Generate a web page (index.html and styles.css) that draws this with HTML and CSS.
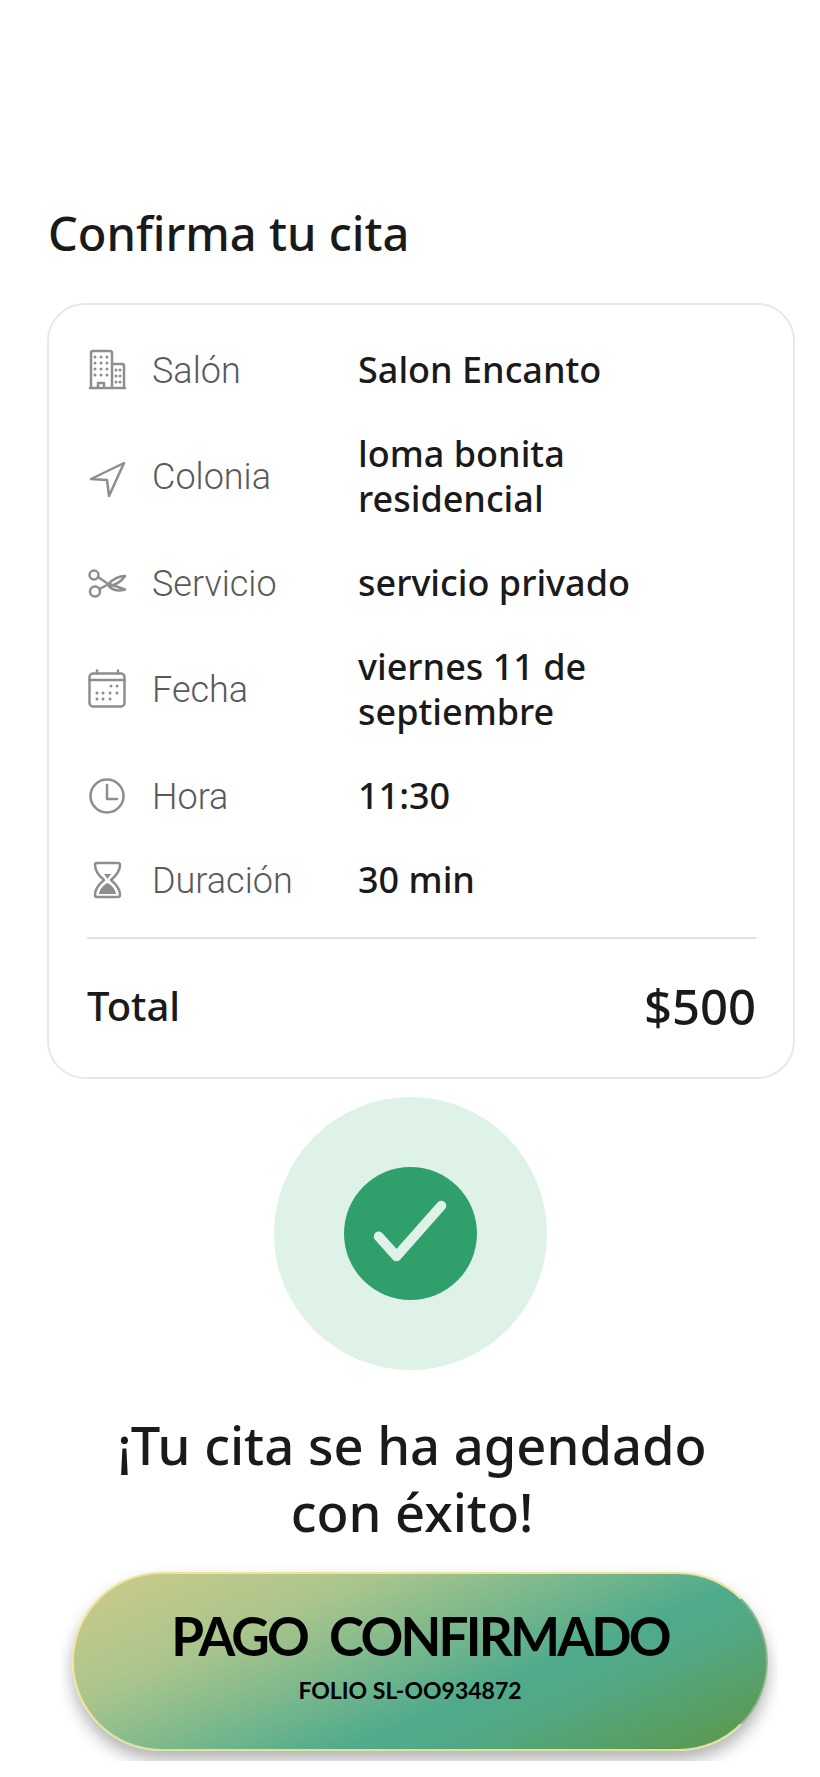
FILE: index.html
```html
<!DOCTYPE html>
<html lang="es">
<head>
  <meta charset="UTF-8">
  <meta name="viewport" content="width=device-width, initial-scale=1.0">
  <title>Confirma tu cita</title>
  <link rel="stylesheet" href="styles.css">
</head>
<body>
  <h1 class="page-title">Confirma tu cita</h1>

  <section class="summary-card">
    <div class="detail-list">
      <div class="detail-label">
        <svg class="detail-icon" viewBox="0 0 40 44">
          <path d="M4 39V4a2 2 0 0 1 2-2h17a2 2 0 0 1 2 2v35M25 15h10a2 2 0 0 1 2 2v22M3 39h35M11 39v-5h6v5" />
          <path class="dots" d="M8 8h.01M14 8h.01M20 8h.01M8 14h.01M14 14h.01M20 14h.01M8 20h.01M14 20h.01M20 20h.01M8 26h.01M14 26h.01M20 26h.01M29 21h.01M33 21h.01M29 27h.01M33 27h.01M29 33h.01M33 33h.01" />
        </svg>
        <span>Salón</span>
      </div>
      <div class="detail-value">Salon Encanto</div>

      <div class="detail-label">
        <svg class="detail-icon" viewBox="0 0 40 44">
          <path d="M4 24L37 8L22 41L20 25Z" />
        </svg>
        <span>Colonia</span>
      </div>
      <div class="detail-value">loma bonita residencial</div>

      <div class="detail-label">
        <svg class="detail-icon" viewBox="0 0 40 44">
          <circle cx="7" cy="13" r="4.5" />
          <circle cx="8" cy="29.5" r="5" />
          <path d="M11 15L19 20.5M12.500 27L20 23C26 17 32 14 38 14C34 20 28 23 22 24.500M21 21.500L38 27.500C32 29.500 27 29 22 24.500" />
        </svg>
        <span>Servicio</span>
      </div>
      <div class="detail-value">servicio privado</div>

      <div class="detail-label">
        <svg class="detail-icon" viewBox="0 0 40 44">
          <rect x="2.500" y="5.500" width="35" height="33" rx="3.500" />
          <path d="M2.500 12h35M10 2.500v3M31 2.500v3" />
          <path class="dots" d="M24 18h.01M30 18h.01M10 25h.01M16 25h.01M23 25h.01M30 25h.01M10 31h.01M16 31h.01M23 31h.01" />
        </svg>
        <span>Fecha</span>
      </div>
      <div class="detail-value">viernes 11 de septiembre</div>

      <div class="detail-label">
        <svg class="detail-icon" viewBox="0 0 40 44">
          <circle cx="20" cy="21" r="16.500" />
          <path d="M20 10v14h10" />
        </svg>
        <span>Hora</span>
      </div>
      <div class="detail-value">11:30</div>

      <div class="detail-label">
        <svg class="detail-icon" viewBox="0 0 40 44">
          <path d="M10 4h21a2 2 0 0 1 2 2c0 6-3 10-9 15c6 5 9 9 9 15a2 2 0 0 1-2 2H10a2 2 0 0 1-2-2c0-6 3-10 9-15c-6-5-9-9-9-15a2 2 0 0 1 2-2Z" />
          <path class="sand" d="M20.500 24c-4 2-8 6-8.500 11h17c-.5-5-4.500-9-8.500-11ZM17 15h7l-3.500 5Z" />
        </svg>
        <span>Duración</span>
      </div>
      <div class="detail-value">30 min</div>
    </div>

    <div class="total-row">
      <span class="total-label">Total</span>
      <span class="total-amount">$500</span>
    </div>
  </section>

  <div class="success-badge">
    <div class="success-dot">
      <svg class="success-check" viewBox="0 0 134 134">
        <path d="M35 70L53 90L98 39" />
      </svg>
    </div>
  </div>

  <h2 class="success-title">¡Tu cita se ha agendado con éxito!</h2>

  <div class="pay-wrap">
    <div class="pay-button">
      <div class="pay-title">PAGO CONFIRMADO</div>
      <div class="pay-folio">FOLIO SL-OO934872</div>
    </div>
  </div>
</body>
</html>
```

FILE: styles.css
```css
* {
  margin: 0;
  padding: 0;
  box-sizing: border-box;
}

body {
  background-color: #fff;
  font-family: "Noto Sans", Arial, sans-serif;
  color: #1a1a1a;
  height: 1777px;
  overflow: hidden;
}

.page-title {
  font-size: 47px;
  font-weight: 500;
  line-height: 60px;
  padding: 203px 0 0 48px;
}

.summary-card {
  margin: 40px 25px 0 47px;
  height: 776px;
  border: 2px solid #e8e8e8;
  border-radius: 38px;
  padding: 42px 37px 0 38px;
}

.detail-list {
  display: grid;
  grid-template-columns: 271px 1fr;
  row-gap: 37px;
  align-items: center;
}

.detail-label {
  display: flex;
  align-items: center;
  gap: 25px;
  font-family: Roboto, Arial, sans-serif;
  font-size: 36px;
  font-weight: 300;
  color: #5a5a5a;
}

.detail-icon {
  width: 40px;
  height: 44px;
  flex: none;
  fill: none;
  stroke: #8e8e8e;
  stroke-width: 2.500;
  stroke-linecap: round;
  stroke-linejoin: round;
}

.detail-icon .dots {
  stroke-width: 3;
}

.detail-icon .sand {
  fill: #8e8e8e;
  stroke: none;
}

.detail-value {
  font-size: 36px;
  font-weight: 500;
  line-height: 45px;
  padding-right: 60px;
  margin-bottom: 2px;
}

.total-row {
  display: flex;
  justify-content: space-between;
  align-items: center;
  margin-top: 33px;
  border-top: 2px solid #e0e0e0;
  padding-top: 33px;
  line-height: 68px;
}

.total-label {
  font-size: 40px;
  font-weight: 500;
}

.total-amount {
  font-size: 49px;
  font-weight: 500;
}

.success-badge {
  width: 273px;
  height: 273px;
  margin: 18px auto 0;
  border-radius: 50%;
  background-color: #dff2e8;
  display: flex;
  align-items: center;
  justify-content: center;
}

.success-dot {
  width: 133px;
  height: 133px;
  border-radius: 50%;
  background-color: #2f9f6b;
}

.success-check {
  display: block;
  width: 133px;
  height: 133px;
  fill: none;
  stroke: #dff2e8;
  stroke-width: 10;
  stroke-linecap: round;
  stroke-linejoin: round;
}

.success-title {
  font-size: 52.500px;
  font-weight: 500;
  line-height: 67px;
  text-align: center;
  margin: 41px auto 0;
  width: 640px;
  padding-left: 4px;
}

.pay-wrap {
  margin: -1px 42px 0 60px;
  padding: 28px 10px 9px 12px;
  height: 217px;
  overflow: hidden;
}

.pay-button {
  height: 179px;
  border-radius: 90px;
  border: 2px solid #eee39a;
  border-right-color: #8fb58a;
  border-bottom-color: #d9e59c;
  background: linear-gradient(157deg, #c4c98b 8%, #a9c58c 28%, #4fab8c 62%, #52a884 72%, #5a9b58 92%);
  box-shadow: 0 9px 16px rgba(0, 0, 0, 0.3);
  text-align: center;
  color: #000;
  font-family: Lato, Arial, sans-serif;
  font-weight: 700;
}

.pay-title {
  font-size: 53px;
  line-height: 60px;
  padding-top: 32px;
  letter-spacing: -2.800px;
  word-spacing: 12px;
}

.pay-folio {
  font-size: 23px;
  line-height: 30px;
  margin-top: 9px;
  padding-right: 20px;
}
```
